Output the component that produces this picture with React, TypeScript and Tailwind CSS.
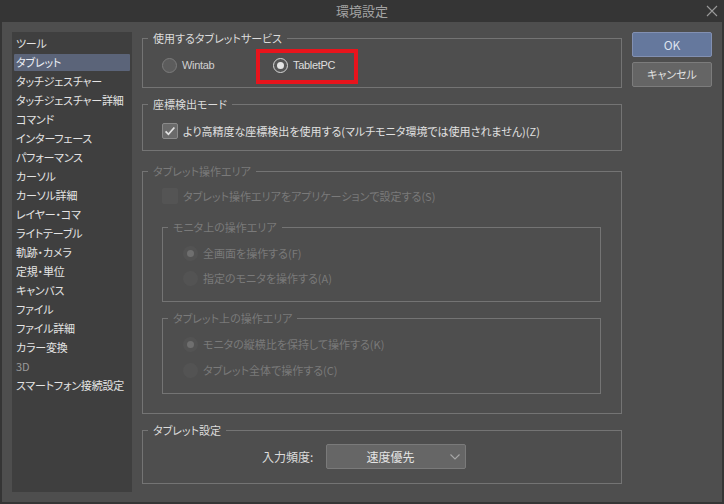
import type { ReactNode } from 'react'

const MENU = [
  'ツール',
  'タブレット',
  'タッチジェスチャー',
  'タッチジェスチャー詳細',
  'コマンド',
  'インターフェース',
  'パフォーマンス',
  'カーソル',
  'カーソル詳細',
  'レイヤー・コマ',
  'ライトテーブル',
  '軌跡・カメラ',
  '定規・単位',
  'キャンバス',
  'ファイル',
  'ファイル詳細',
  'カラー変換',
  '3D',
  'スマートフォン接続設定',
]

const FONT =
  'font-["Noto_Sans_CJK_JP","Liberation_Sans",sans-serif] [font-feature-settings:"palt"]'

/** Bordered group with its caption sitting over the top edge. */
function Group({
  title,
  disabled,
  className,
  children,
}: {
  title: string
  disabled?: boolean
  className?: string
  children?: ReactNode
}) {
  return (
    <div className={`relative border border-[#747474] ${className ?? ''}`}>
      <span
        className={`absolute -top-[9px] left-[5px] whitespace-nowrap bg-[#4e4e4e] px-[5px] text-[11px] leading-[16px] ${
          disabled ? 'text-[#7a7a7a]' : 'text-[#dcdcdc]'
        }`}
      >
        {title}
      </span>
      {children}
    </div>
  )
}

function Radio({ state }: { state: 'on' | 'off' | 'dis-on' | 'dis-off' }) {
  if (state === 'on') {
    return (
      <span className="flex size-[15px] shrink-0 items-center justify-center rounded-full border-[1.5px] border-[#d6d6d6] bg-[#565656]">
        <span className="size-[7px] rounded-full bg-[#e4e4e4]" />
      </span>
    )
  }
  if (state === 'off') {
    return <span className="size-[15px] shrink-0 rounded-full border border-[#7c7c7c] bg-[#5c5c5c]" />
  }
  return (
    <span className="flex size-[15px] shrink-0 items-center justify-center rounded-full bg-[#535353]">
      {state === 'dis-on' && <span className="size-[7px] rounded-full bg-[#6f6f6f]" />}
    </span>
  )
}

function RadioRow({ label, state }: { label: string; state: 'dis-on' | 'dis-off' }) {
  return (
    <div className="flex h-[16px] items-center gap-[5px]">
      <Radio state={state} />
      <span className="whitespace-nowrap text-[11px] text-[#7a7a7a]">{label}</span>
    </div>
  )
}

export default function App() {
  return (
    <div
      className={`flex h-[504px] w-[724px] flex-col overflow-hidden bg-[#353535] ${FONT}`}
    >
      {/* title bar */}
      <div className="flex h-[22px] items-center">
        <div className="w-[40px]" />
        <div className="flex-1 text-center text-[13px] leading-[22px] text-[#a4a4a4]">
          環境設定
        </div>
        <div className="flex w-[40px] justify-end pr-[6px]">
          <svg viewBox="0 0 12 12" className="size-[12px]" stroke="#9a9a9a" strokeWidth="1.1" fill="none">
            <path d="M1 1l10 10M11 1L1 11" />
          </svg>
        </div>
      </div>

      {/* body */}
      <div className="mx-[2px] mb-[2px] flex flex-1 bg-[#4e4e4e] pl-[10px] pr-[10px]">
        {/* category list */}
        <div className="mt-[10px] mb-[10px] w-[120px] bg-[#3f3f3f] pt-[3px]">
          {MENU.map((item) => (
            <div
              key={item}
              className={`mx-[2px] mb-[2px] flex h-[17px] items-center whitespace-nowrap rounded-[1px] pl-[2px] text-[11px] tracking-[-0.2px] ${
                item === 'タブレット' ? 'bg-[#5b6479] text-[#eceff5]' : ''
              } ${item === '3D' ? 'text-[#9a9a9a]' : 'text-[#e4e4e4]'}`}
            >
              {item}
            </div>
          ))}
        </div>

        {/* settings */}
        <div className="ml-[10px] flex w-[480px] flex-col pt-[16px]">
          <Group title="使用するタブレットサービス" className="h-[50px]">
            <div className="flex pl-[19px] pt-[18px]">
              <div className="flex h-[16px] w-[111px] items-center gap-[5px]">
                <Radio state="off" />
                <span className='font-["Liberation_Sans",sans-serif] text-[11px] tracking-[-0.3px] text-[#d0d0d0]'>
                  Wintab
                </span>
              </div>
              <div className="relative flex h-[16px] items-center gap-[5px]">
                <Radio state="on" />
                <span className='font-["Liberation_Sans",sans-serif] text-[11px] tracking-[-0.3px] text-[#dedede]'>
                  TabletPC
                </span>
                <span className="absolute -left-[17px] -top-[8px] h-[35px] w-[102px] border-[4px] border-[#e8141c]" />
              </div>
            </div>
          </Group>

          <Group title="座標検出モード" className="mt-[16px] h-[47px]">
            <div className="flex items-center gap-[5px] pl-[19px] pt-[18px]">
              <span className="flex size-[16px] shrink-0 items-center justify-center rounded-[2px] border border-[#8a8a8a] bg-[#6a6a6a]">
                <svg viewBox="0 0 16 16" className="size-[14px]" fill="none" stroke="#e2e2e2" strokeWidth="2">
                  <path d="M3 8.5l3.2 3.3L13 4" />
                </svg>
              </span>
              <span className="whitespace-nowrap text-[11px] text-[#e0e0e0]">
                より高精度な座標検出を使用する(マルチモニタ環境では使用されません)(Z)
              </span>
            </div>
          </Group>

          <Group title="タブレット操作エリア" disabled className="mt-[20px] h-[243px]">
            <div className="flex items-center gap-[5px] pl-[19px] pt-[16px]">
              <span className="size-[16px] shrink-0 rounded-[2px] bg-[#545454]" />
              <span className="whitespace-nowrap text-[11px] text-[#7a7a7a]">
                タブレット操作エリアをアプリケーションで設定する(S)
              </span>
            </div>

            <Group title="モニタ上の操作エリア" disabled className="ml-[19px] mr-[20px] mt-[22px] h-[75px]">
              <div className="flex flex-col gap-[9px] pl-[20px] pt-[18px]">
                <RadioRow label="全画面を操作する(F)" state="dis-on" />
                <RadioRow label="指定のモニタを操作する(A)" state="dis-off" />
              </div>
            </Group>

            <Group title="タブレット上の操作エリア" disabled className="ml-[19px] mr-[20px] mt-[16px] h-[76px]">
              <div className="flex flex-col gap-[10px] pl-[20px] pt-[18px]">
                <RadioRow label="モニタの縦横比を保持して操作する(K)" state="dis-on" />
                <RadioRow label="タブレット全体で操作する(C)" state="dis-off" />
              </div>
            </Group>
          </Group>

          <Group title="タブレット設定" className="mt-[16px] h-[54px]">
            <div className="flex items-center pl-[119px] pt-[13px]">
              <span className="w-[53px] whitespace-nowrap text-[12px] text-[#dcdcdc]">入力頻度:</span>
              <div className="ml-[11px] flex h-[25px] w-[140px] items-center rounded-[2px] border border-[#7a7a7a] bg-[#666666]">
                <span className="flex-1 pl-[4px] text-center text-[12px] text-[#e4e4e4]">速度優先</span>
                <svg viewBox="0 0 10 6" className="mr-[5px] h-[6px] w-[10px]" fill="none" stroke="#a8a8a8" strokeWidth="1.1">
                  <path d="M0.5 0.5L5 5l4.5-4.5" />
                </svg>
              </div>
            </div>
          </Group>
        </div>

        {/* buttons */}
        <div className="ml-[10px] flex w-[80px] flex-col gap-[5px] pt-[10px]">
          <div className="flex h-[25px] items-center justify-center rounded-[2px] border border-[#8290b2] bg-[#65789d] text-[12px] text-[#dde2ee]">
            OK
          </div>
          <div className="flex h-[25px] items-center justify-center rounded-[2px] border border-[#7c7c7c] bg-[#656565] text-[11px] text-[#e0e0e0]">
            キャンセル
          </div>
        </div>
      </div>
    </div>
  )
}
